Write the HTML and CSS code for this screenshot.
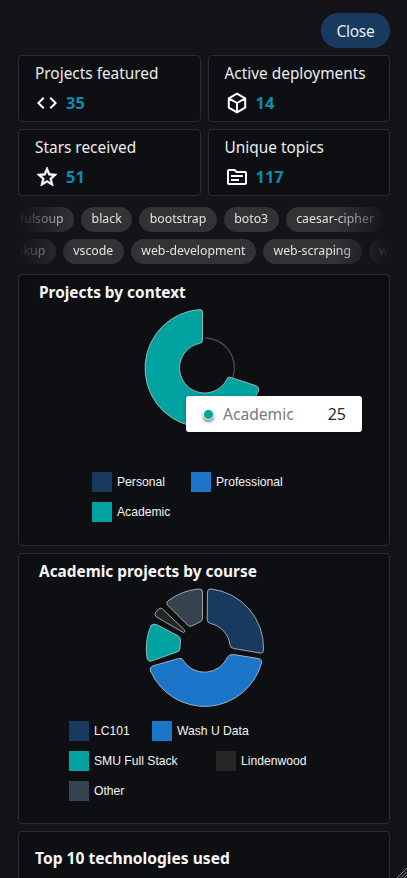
FILE: index.html
```html
<!DOCTYPE html>
<html lang="en">
<head>
<meta charset="utf-8">
<title>Portfolio stats</title>
<link rel="stylesheet" href="styles.css">
</head>
<body>
<main class="page">
  <div class="top"><button class="close">Close</button></div>
  <section class="stats">
    <div class="stat">
      <div class="stat-label">Projects featured</div>
      <div class="stat-row">
        <svg class="icon" viewBox="0 0 24 24"><path class="solid" d="M9.4 16.6L4.8 12l4.6-4.6L8 6l-6 6 6 6 1.4-1.4zm5.2 0l4.6-4.6-4.6-4.6L16 6l6 6-6 6-1.4-1.4z"/></svg>
        <span class="stat-num">35</span>
      </div>
    </div>
    <div class="stat">
      <div class="stat-label">Active deployments</div>
      <div class="stat-row">
        <svg class="icon" viewBox="0 0 24 24"><path class="line" d="M12 2.6l8.2 4.7v9.4L12 21.4l-8.2-4.7V7.3zM3.8 7.3L12 12l8.2-4.7M12 12v9.4"/></svg>
        <span class="stat-num">14</span>
      </div>
    </div>
    <div class="stat">
      <div class="stat-label">Stars received</div>
      <div class="stat-row">
        <svg class="icon" viewBox="0 0 24 24"><path class="solid heavy" d="M22 9.24l-7.19-.62L12 2 9.19 8.63 2 9.24l5.46 4.73L5.82 21 12 17.27 18.18 21l-1.63-7.03L22 9.24zM12 15.4l-3.76 2.27 1-4.28-3.32-2.88 4.38-.38L12 6.1l1.71 4.04 4.38.38-3.32 2.88 1 4.28L12 15.4z"/></svg>
        <span class="stat-num">51</span>
      </div>
    </div>
    <div class="stat">
      <div class="stat-label">Unique topics</div>
      <div class="stat-row">
        <svg class="icon" viewBox="0 0 24 24"><path class="solid" d="M20 6h-8l-2-2H4c-1.1 0-2 .9-2 2v12c0 1.100.9 2 2 2h16c1.100 0 2-.9 2-2V8c0-1.100-.9-2-2-2zm0 12H4V6h5.170l2 2H20v10zm-6-2H6v-2h8v2zm4-4H6v-2h12v2z"/></svg>
        <span class="stat-num">117</span>
      </div>
    </div>
  </section>

  <section class="tags">
    <div class="tag-row row-a">
      <span class="tag">beautifulsoup</span><span class="tag">black</span><span class="tag">bootstrap</span><span class="tag">boto3</span><span class="tag">caesar-cipher</span>
    </div>
    <div class="tag-row row-b">
      <span class="tag">lookup</span><span class="tag">vscode</span><span class="tag">web-development</span><span class="tag">web-scraping</span><span class="tag">w</span>
    </div>
  </section>

  <section class="card chart-card first">
    <h2 class="chart-title">Projects by context</h2>
    <svg class="donut donut-a" viewBox="136.500 305 135 130">
      <path class="track" d="M205 338A30 30 0 0 1 232.500 377"/>
      <path class="slice teal" d="M202 312L202 340Q202 343 199 343.500A25 25 0 1 0 227 378Q229 376.500 232 378L255 385.500Q259 387 258 391A59 59 0 1 1 199 309.500Q202 309 202 312Z"/>
    </svg>
    <div class="legend legend-a">
      <div class="legend-row">
        <div class="legend-item w99"><span class="swatch navy"></span>Personal</div>
        <div class="legend-item"><span class="swatch blue"></span>Professional</div>
      </div>
      <div class="legend-row">
        <div class="legend-item"><span class="swatch c-teal"></span>Academic</div>
      </div>
    </div>
    <div class="tooltip">
      <span class="tip-dot"></span>
      <span class="tip-name">Academic</span>
      <span class="tip-value">25</span>
    </div>
  </section>

  <section class="card chart-card second">
    <h2 class="chart-title">Academic projects by course</h2>
    <svg class="donut donut-b" viewBox="136.500 585 135 125">
      <path class="slice navy-f" d="M207 592Q207 588.500 210.500 589A59 59 0 0 1 263 649.500Q263 653.500 259.500 653L233 648.500Q230 648 229.500 645A25 25 0 0 0 210 623.500Q206.700 622.500 206.700 620Z"/>
      <path class="slice blue-f" d="M233 654.500L258 658.500Q262 659.500 261 663A59 59 0 0 1 150 671Q148.500 667.500 152 666L178 658.500Q181 657.500 182.500 660A25 25 0 0 0 227 657Q229 654 233 654.500Z"/>
      <path class="slice teal" d="M157 625L177 635.500Q180 637 180 640L179.500 648Q179.500 651 176.500 652L151 661Q147.500 662 146.500 658A59 59 0 0 1 150.500 625.500Q153.500 623 157 625Z"/>
      <path class="slice dark-f" d="M162 609L184 630Q185 632 183 632.500L156 617Q153.500 615 155 612.500L158 609Q160 607.500 162 609Z"/>
      <path class="slice slate-f" d="M202 592L202 618Q202 621 199.500 622L191 626Q189 627 187 625L167 605Q165 602.500 168 600.500A59 59 0 0 1 198 589Q202 588.500 202 592Z"/>
    </svg>
    <div class="legend legend-b">
      <div class="legend-row">
        <div class="legend-item w83"><span class="swatch navy"></span>LC101</div>
        <div class="legend-item"><span class="swatch blue"></span>Wash U Data</div>
      </div>
      <div class="legend-row">
        <div class="legend-item w147"><span class="swatch c-teal"></span>SMU Full Stack</div>
        <div class="legend-item"><span class="swatch dark"></span>Lindenwood</div>
      </div>
      <div class="legend-row">
        <div class="legend-item"><span class="swatch slate"></span>Other</div>
      </div>
    </div>
  </section>

  <section class="card third">
    <h2 class="tech-title">Top 10 technologies used</h2>
  </section>
</main>
<svg class="grip" viewBox="0 0 11 11"><path d="M11 1L1 11M11 4.500L4.500 11M11 8L8 11"/></svg>
</body>
</html>
```
FILE: styles.css
```css
* { box-sizing: border-box; }
html, body { margin: 0; height: 878px; overflow: hidden; background: #131318; }
body { font-family: "Noto Sans", "Open Sans", sans-serif; color: #e6e6e6; }
.page { padding: 13px 17px 0 18px; }
.top { display: flex; justify-content: flex-end; }
.close {
  width: 69px; height: 35px; border: 0; border-radius: 17px;
  background: #173a5e; color: #e8ebef;
  font: 400 15.500px "Noto Sans", sans-serif; letter-spacing: -0.3px; padding: 0;
}
.stats { display: grid; grid-template-columns: 1fr 1fr; gap: 7px; margin-top: 7px; }
.stat {
  height: 67px; padding: 7px 16px 0;
  background: #0e0f13; border: 1px solid #2a2a30; border-radius: 4px;
}
.stat-label { font-size: 15.400px; line-height: 21px; color: #ececec; white-space: nowrap; }
.stat-row { display: flex; align-items: center; gap: 7px; margin-top: 7px; height: 24px; }
.icon { width: 24px; height: 24px; flex: none; }
.solid { fill: #fff; }
.heavy { stroke: #fff; stroke-width: .7; }
.line { fill: none; stroke: #fff; stroke-width: 2; stroke-linejoin: round; stroke-linecap: round; }
.stat-num { font-size: 16.400px; font-weight: 700; color: #0e8bad; line-height: 24px; }
.tags {
  display: flex; flex-direction: column; gap: 7px; margin-top: 11px; overflow: hidden;
  -webkit-mask-image: linear-gradient(to right, transparent 0, #000 15%, #000 85%, transparent 100%);
  mask-image: linear-gradient(to right, transparent 0, #000 15%, #000 85%, transparent 100%);
}
.tag-row { display: flex; gap: 7px; }
.row-a { margin-left: -45px; }
.row-b { margin-left: -23px; }
.tag {
  flex: none; height: 25px; padding: 0 10.500px; border-radius: 13px;
  background: #333336; color: #e2e2e2; font-size: 12.300px; line-height: 24px;
}
.card { background: #0e0f13; border: 1px solid #2a2a30; border-radius: 4px; }
.chart-card { position: relative; padding: 0 20px; }
.first { height: 272px; margin-top: 10px; }
.second { height: 271px; margin-top: 7px; }
.third { height: 60px; margin-top: 7px; padding: 15px 16px 0; }
.chart-title { margin: 8px 0 0; font-size: 15.400px; line-height: 20px; font-weight: 700; color: #f6f6f6; white-space: nowrap; }
.tech-title { margin: 0; font-size: 15.600px; line-height: 22px; font-weight: 700; color: #f6f6f6; }
.donut { display: block; margin: 0 auto; width: 135px; }
.donut-a { height: 130px; margin-top: 2px; }
.donut-b { height: 125px; margin-top: 3px; }
.track { fill: none; stroke: #45454b; stroke-width: 1.500; stroke-linecap: round; }
.slice { stroke: #c9d0d2; stroke-width: 1; stroke-opacity: .75; }
.teal { fill: #00a3a0; }
.navy-f { fill: #173a5e; }
.blue-f { fill: #1b75c9; }
.dark-f { fill: #262626; }
.slate-f { fill: #37434e; }
.legend { display: flex; flex-direction: column; gap: 10px; font-family: "Liberation Sans", Arial, sans-serif; font-size: 12.150px; color: #f4f4f4; }
.legend-a { margin: 37px 0 0 53px; }
.legend-b { margin: 11px 0 0 30px; }
.legend-row { display: flex; }
.legend-item { display: flex; align-items: center; height: 20px; white-space: nowrap; }
.w99 { width: 99px; }
.w83 { width: 83px; }
.w147 { width: 147px; }
.swatch { width: 20px; height: 20px; margin-right: 5px; flex: none; }
.navy { background: #173a5e; }
.blue { background: #1b75c9; }
.c-teal { background: #00a3a0; }
.dark { background: #262626; }
.slate { background: #37434e; }
.tooltip {
  position: absolute; left: 167px; top: 121px; width: 176px; height: 36px;
  display: flex; align-items: center; padding: 0 16px 0 17px;
  background: #fff; border-radius: 3px; box-shadow: 0 1px 4px rgba(0,0,0,.3);
}
.tip-dot {
  width: 11px; height: 11px; border-radius: 50%; background: #00a3a0; border: 1.500px solid #fff;
  box-shadow: 0 2px 3px rgba(0,0,0,.5); flex: none;
}
.tip-name { margin-left: 9px; flex: 1; font-size: 15.600px; color: #77797f; }
.tip-value { font-size: 16px; color: #2a2a2e; }
.grip { position: fixed; right: 0; bottom: 0; width: 11px; height: 11px; }
.grip path { fill: none; stroke: #8b8b8b; stroke-width: 1; }
```
